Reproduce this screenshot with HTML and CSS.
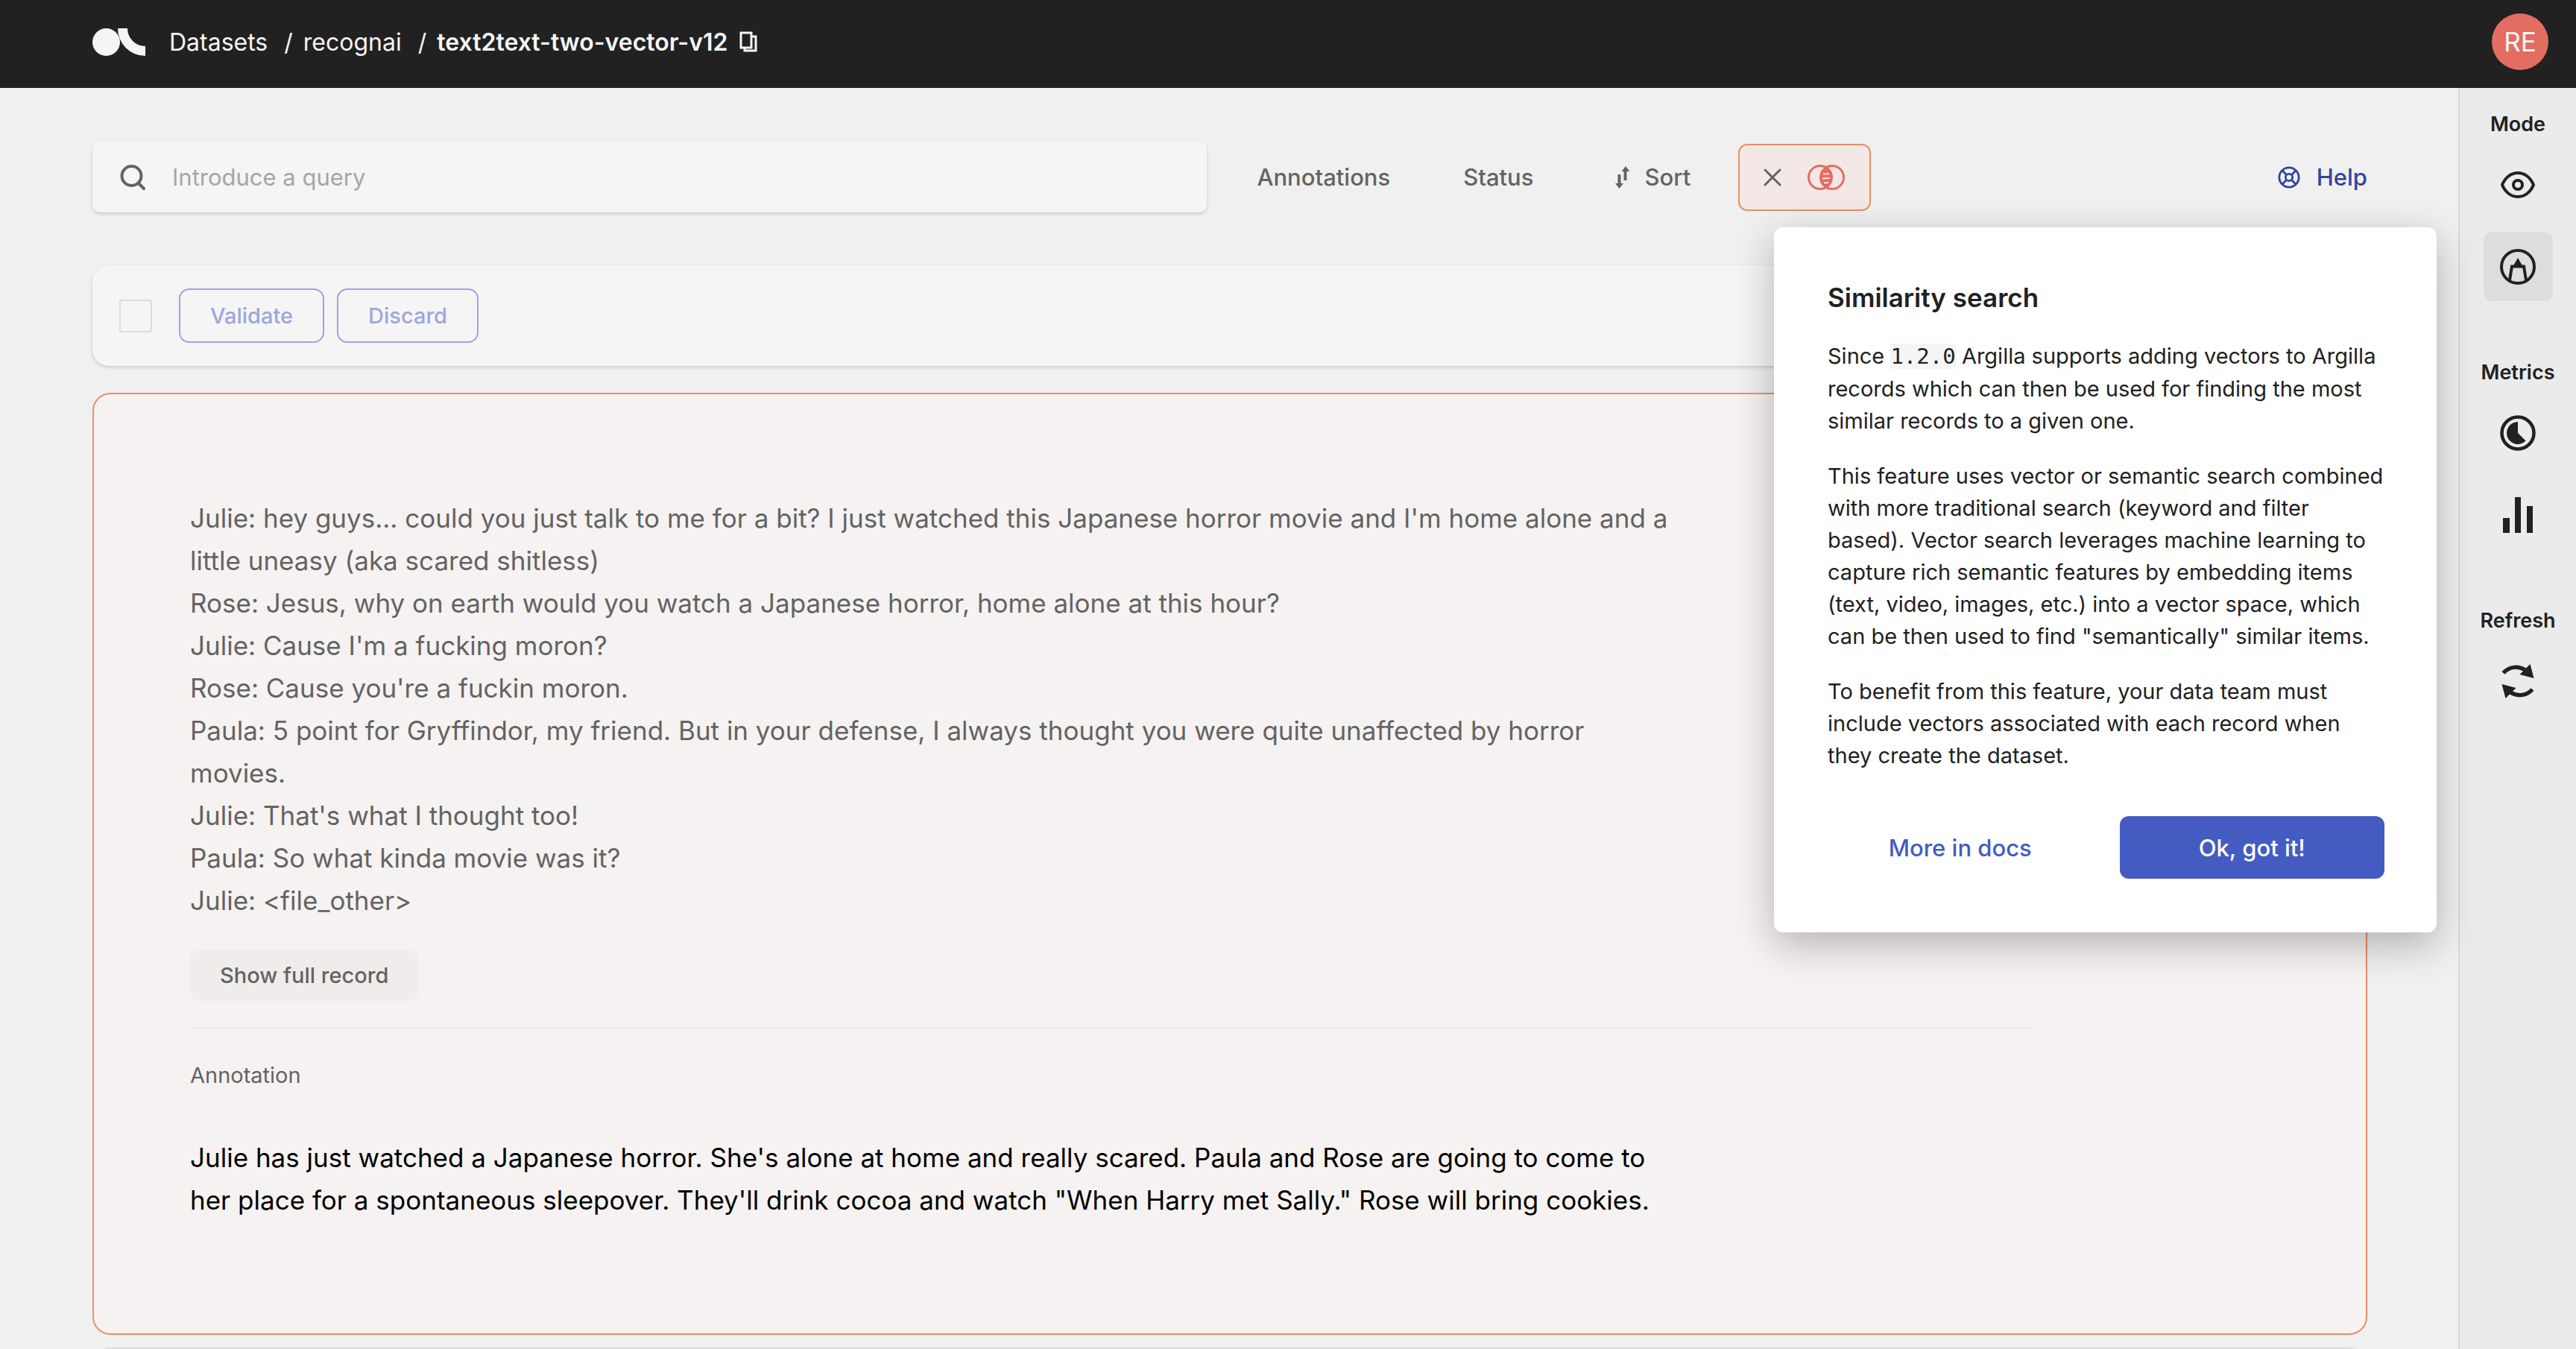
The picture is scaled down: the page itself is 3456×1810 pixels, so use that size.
FILE: index.html
```html
<!DOCTYPE html>
<html lang="en">
<head>
<meta charset="utf-8">
<title>text2text-two-vector-v12</title>
<link rel="stylesheet" href="styles.css">
</head>
<body>
<div class="app">
  <header class="topbar">
    <a class="logo" href="#" aria-label="Home">
      <svg width="71" height="37" viewBox="0 0 71 37" fill="#f5f5f5"><circle cx="18.500" cy="18.500" r="18.500"/><path d="M34 0H47A24 24 0 0 0 71 24V37A37 37 0 0 1 34 0Z"/></svg>
    </a>
    <nav class="crumbs" aria-label="Breadcrumb">
      <a href="#">Datasets</a><span class="sep">/</span><a href="#">recognai</a><span class="sep">/</span><a class="current" href="#">text2text-two-vector-v12</a>
      <button class="copy" type="button" aria-label="Copy name">
        <svg width="24" height="28" viewBox="0 0 24 28" fill="none" stroke="#f5f5f5" stroke-width="3"><path d="M2 2H16V22H2Z"/><path d="M16 7H22V26H7V22"/></svg>
      </button>
    </nav>
    <button class="avatar" type="button">RE</button>
  </header>
  <div class="body">
    <main class="main">
      <div class="filters">
        <label class="search">
          <svg width="36" height="36" viewBox="0 0 36 36" fill="none" stroke="#636363" stroke-width="4" stroke-linecap="round"><circle cx="15.500" cy="16" r="13"/><path d="M25 26L32 33"/></svg>
          <input type="text" placeholder="Introduce a query" aria-label="Query">
        </label>
        <div class="filter-list">
          <button class="filter" type="button">Annotations</button>
          <button class="filter" type="button">Status</button>
          <button class="filter sort" type="button">
            <svg width="20" height="30" viewBox="0 0 20 30" fill="#636363"><path d="M11.500 19V7H8.500L14 0L19.500 7H15.500V19Z"/><path d="M3.500 11V23H0L5.500 30L11 23H7.500V11Z"/></svg>
            Sort
          </button>
          <button class="similarity" type="button" aria-label="Remove similarity filter">
            <svg width="24" height="24" viewBox="0 0 24 24" fill="none" stroke="#636363" stroke-width="3" stroke-linecap="round"><path d="M2 2L22 22M22 2L2 22"/></svg>
            <svg width="52" height="36" viewBox="0 0 52 36" fill="none" stroke="#e46d61" stroke-width="3"><circle cx="18" cy="18" r="15.500"/><circle cx="34" cy="18" r="15.500"/><path d="M26 5C19 12 19 24 26 31C33 24 33 12 26 5Z" fill="#e46d61"/><path d="M22 13.500L30 13M21 19.500L31 19M23 25.500L29 25" stroke="#f3e8e6" stroke-width="2"/></svg>
          </button>
        </div>
        <a class="help" href="#">
          <svg width="30" height="30" viewBox="0 0 32 32" fill="none" stroke="#33449c" stroke-width="3"><circle cx="16" cy="16" r="14"/><circle cx="16" cy="16" r="5"/><path d="M6.500 6.500L12 12M25.500 6.500L20 12M6.500 25.500L12 20M25.500 25.500L20 20"/></svg>
          Help
        </a>
      </div>
      <div class="bulk">
        <input class="check" type="checkbox" aria-label="Select all records">
        <button class="outline" type="button">Validate</button>
        <button class="outline" type="button">Discard</button>
      </div>
      <article class="record selected">
        <div class="content">
          <p class="text">Julie: hey guys... could you just talk to me for a bit? I just watched this Japanese horror movie and I'm home alone and a little uneasy (aka scared shitless)
Rose: Jesus, why on earth would you watch a Japanese horror, home alone at this hour?
Julie: Cause I'm a fucking moron?
Rose: Cause you're a fuckin moron.
Paula: 5 point for Gryffindor, my friend. But in your defense, I always thought you were quite unaffected by horror movies.
Julie: That's what I thought too!
Paula: So what kinda movie was it?
Julie: &lt;file_other&gt;</p>
          <button class="full" type="button">Show full record</button>
          <hr>
          <h2 class="label">Annotation</h2>
          <p class="text annotation">Julie has just watched a Japanese horror. She's alone at home and really scared. Paula and Rose are going to come to her place for a spontaneous sleepover. They'll drink cocoa and watch "When Harry met Sally." Rose will bring cookies.</p>
        </div>
      </article>
      <article class="record"></article>
    </main>
    <aside class="sidebar">
      <section class="group">
        <h2>Mode</h2>
        <button class="tool" type="button" aria-label="Explore">
          <svg width="48" height="48" viewBox="0 0 48 48" fill="none" stroke="#212121" stroke-width="4"><path d="M3 24C7 14 15 8 24 8S41 14 45 24C41 34 33 40 24 40S7 34 3 24Z" stroke-linejoin="round"/><circle cx="24" cy="24" r="6"/></svg>
        </button>
        <button class="tool active" type="button" aria-label="Annotate">
          <svg width="48" height="48" viewBox="0 0 48 48" fill="none" stroke="#212121" stroke-width="4"><circle cx="24" cy="24" r="22"/><path d="M13 42L16 23.500H32L35 42"/><path d="M24 12L31 24H17Z" fill="#212121" stroke="none"/></svg>
        </button>
      </section>
      <section class="group">
        <h2>Metrics</h2>
        <button class="tool" type="button" aria-label="Progress">
          <svg width="48" height="48" viewBox="0 0 48 48"><circle cx="24" cy="24" r="21.500" fill="none" stroke="#212121" stroke-width="4.500"/><path d="M24 24V9A15 15 0 1 0 34.600 34.600Z" fill="#212121"/></svg>
        </button>
        <button class="tool" type="button" aria-label="Stats">
          <svg width="48" height="48" viewBox="0 0 48 48" fill="#212121"><path d="M4 28H13V48H4ZM20 0H28V48H20ZM36 12H44V48H36Z"/></svg>
        </button>
      </section>
      <section class="group">
        <h2>Refresh</h2>
        <button class="tool" type="button" aria-label="Refresh">
          <svg width="48" height="48" viewBox="0 0 48 48"><path d="M4.500 13C13 3.500 26 3 36 10.500M43.500 35C35 44.500 22 45 12 37.500" fill="none" stroke="#212121" stroke-width="5.500"/><path d="M40.500 1L45.500 20L26.500 15ZM7.500 47L2.500 28L21.500 33Z" fill="#212121"/></svg>
        </button>
      </section>
    </aside>
    <div class="popover" role="dialog" aria-labelledby="pop-title">
      <h2 id="pop-title">Similarity search</h2>
      <p>Since <code>1.2.0</code> Argilla supports adding vectors to Argilla records which can then be used for finding the most similar records to a given one.</p>
      <p>This feature uses vector or semantic search combined with more traditional search (keyword and filter based). Vector search leverages machine learning to capture rich semantic features by embedding items (text, video, images, etc.) into a vector space, which can be then used to find "semantically" similar items.</p>
      <p>To benefit from this feature, your data team must include vectors associated with each record when they create the dataset.</p>
      <div class="actions">
        <a class="docs" href="#">More in docs</a>
        <button class="primary" type="button">Ok, got it!</button>
      </div>
    </div>
  </div>
</div>
</body>
</html>
```
FILE: styles.css
```css
* { box-sizing: border-box; }

body {
  margin: 0;
  background: #f0f0f0;
  color: #212121;
  font-family: Inter, "Liberation Sans", sans-serif;
  font-size: 31px;
}

h2, p { margin: 0; }
a { color: inherit; text-decoration: none; }
svg { display: block; flex: none; }

button {
  display: flex;
  align-items: center;
  justify-content: center;
  margin: 0;
  padding: 0;
  border: 0;
  background: none;
  color: inherit;
  font: inherit;
}

.app {
  display: flex;
  flex-direction: column;
  height: 100vh;
  overflow: hidden;
}

/* Top bar */
.topbar {
  display: flex;
  align-items: center;
  flex: none;
  height: 118px;
  padding: 0 37px 6px 124px;
  background: #212121;
  color: #f5f5f5;
}

.crumbs {
  display: flex;
  align-items: center;
  flex: 1;
  margin-left: 32px;
  font-size: 32px;
}
.sep { margin: 0 14px 0 22px; }
.current { font-weight: 600; }
.copy { margin-left: 16px; }

.avatar {
  width: 76px;
  height: 76px;
  border-radius: 50%;
  background: #e46d61;
  font-size: 35px;
}

/* Page body */
.body {
  position: relative;
  display: flex;
  flex: 1;
  min-height: 0;
}

.main {
  flex: 1;
  min-width: 0;
  overflow: hidden;
  padding: 72px 122px 0 124px;
}

.filters {
  display: flex;
  align-items: center;
}

.search {
  display: flex;
  align-items: center;
  width: 49%;
  height: 95px;
  padding: 0 37px;
  border-radius: 10px;
  background: #f5f5f5;
  box-shadow: 0 2px 4px rgba(0, 0, 0, 0.16);
}
.search input {
  flex: 1;
  margin-left: 34px;
  padding: 0;
  border: 0;
  background: none;
  font: inherit;
}
.search input::placeholder { color: #a6a6a6; opacity: 1; }

.filter-list {
  display: flex;
  align-items: center;
  margin-left: 67px;
  color: #636363;
  font-weight: 500;
}
.filter { margin-right: 98px; }
.sort { gap: 19px; margin: 0 64px 0 12px; }

.similarity {
  gap: 34px;
  width: 178px;
  height: 90px;
  border: 2px solid #e98f62;
  border-radius: 12px;
  background: #f3e8e6;
}

.help {
  display: flex;
  align-items: center;
  gap: 22px;
  margin-left: auto;
  color: #33449c;
  font-weight: 500;
}

.bulk {
  display: flex;
  align-items: center;
  gap: 17px;
  height: 135px;
  margin-top: 71px;
  padding: 0 36px;
  border-radius: 22px;
  background: #f5f5f5;
  box-shadow: 0 2px 4px rgba(0, 0, 0, 0.16);
}
.check {
  appearance: none;
  width: 44px;
  height: 44px;
  margin: 0 19px 0 0;
  border: 2px solid #dcdcdc;
  border-radius: 2px;
}
.outline {
  height: 73px;
  padding: 0 40px;
  border: 2px solid #9ca6dc;
  border-radius: 14px;
  color: #9ca6dc;
  font-size: 29px;
  font-weight: 500;
}

/* Records */
.record {
  min-height: 200px;
  margin-top: 17px;
  border: 2px solid #dcdcdc;
  border-radius: 24px;
  background: #f5f5f5;
}
.record.selected {
  margin-top: 36px;
  padding: 138px 444px 150px 129px;
  border-color: #e98f62;
  background: #f6f2f1;
}
.text {
  max-width: 2000px;
  color: #636363;
  font-size: 35px;
  line-height: 57px;
  white-space: pre-line;
}
.annotation { margin-top: 64px; color: #000; }
.full {
  height: 69px;
  margin-top: 37px;
  padding: 0 40px;
  border-radius: 14px;
  background: #f0eceb;
  color: #636363;
  font-size: 29px;
  font-weight: 500;
}
hr {
  height: 2px;
  margin: 35px 0 0;
  border: 0;
  background: #ebebe9;
}
.label {
  margin-top: 45px;
  color: #636363;
  font-size: 29px;
  font-weight: 400;
  line-height: 36px;
}

/* Sidebar */
.sidebar {
  flex: none;
  width: 158px;
  border-left: 2px solid #d9d9d9;
  background: #ebebeb;
}
.group {
  display: flex;
  flex-direction: column;
  align-items: center;
  gap: 17px;
  padding-top: 32px;
  margin-bottom: 47px;
}
.group h2 {
  font-size: 27px;
  font-weight: 600;
  line-height: 34px;
}
.tool {
  width: 93px;
  height: 93px;
  border-radius: 12px;
}
.tool.active { background: #dddddd; }

/* Popover */
.popover {
  position: absolute;
  top: 187px;
  right: 187px;
  width: 889px;
  padding: 72px 70px 72px 72px;
  border-radius: 12px;
  background: #fff;
  box-shadow: 0 16px 54px rgba(0, 0, 0, 0.27);
}
.popover h2 {
  margin-bottom: 35px;
  font-size: 35px;
  font-weight: 600;
  line-height: 44px;
}
.popover p {
  margin-bottom: 31px;
  font-size: 29px;
  line-height: 43px;
}
.popover code {
  background: #f5f5f5;
  font-family: "DejaVu Sans Mono", monospace;
  font-size: 29px;
}
.actions {
  display: grid;
  grid-template-columns: 1fr 1fr;
  gap: 36px;
  margin-top: 60px;
  font-weight: 500;
}
.docs, .primary {
  display: flex;
  align-items: center;
  justify-content: center;
  height: 84px;
  border-radius: 12px;
}
.docs { color: #445bc2; }
.primary { background: #445bc2; color: #fff; }
```
